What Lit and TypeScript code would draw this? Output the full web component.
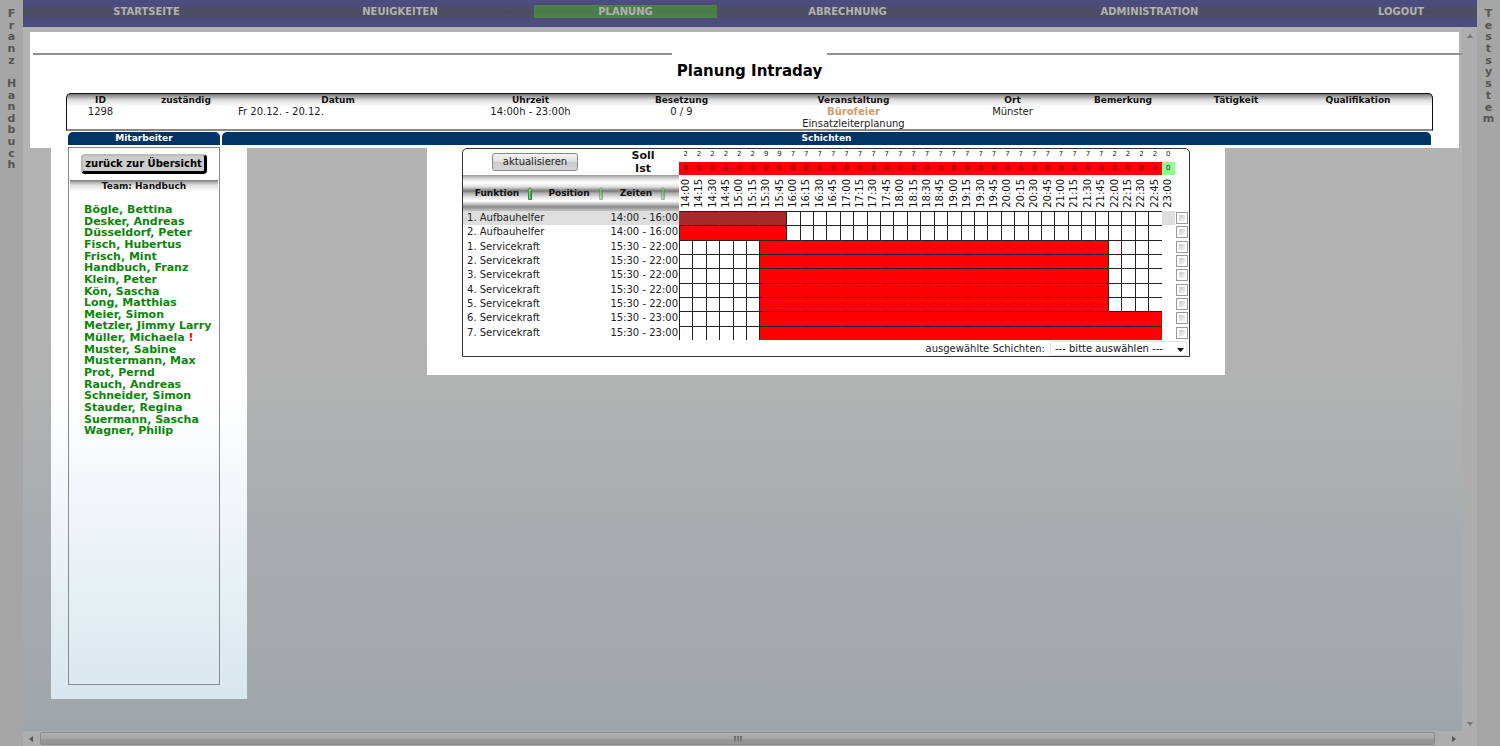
import { LitElement, html, css } from "lit";
import { customElement, state } from "lit/decorators.js";

interface Shift {
  nr: number;
  name: string;
  from: number;
  to: number;
}

const SLOTS = 37;
const START = 14 * 60;

const clock = (minutes: number) =>
  `${String(Math.floor(minutes / 60)).padStart(2, "0")}:${String(minutes % 60).padStart(2, "0")}`;

const SHIFTS: Shift[] = [
  { nr: 1, name: "Aufbauhelfer", from: 0, to: 8 },
  { nr: 2, name: "Aufbauhelfer", from: 0, to: 8 },
  { nr: 1, name: "Servicekraft", from: 6, to: 32 },
  { nr: 2, name: "Servicekraft", from: 6, to: 32 },
  { nr: 3, name: "Servicekraft", from: 6, to: 32 },
  { nr: 4, name: "Servicekraft", from: 6, to: 32 },
  { nr: 5, name: "Servicekraft", from: 6, to: 32 },
  { nr: 6, name: "Servicekraft", from: 6, to: 36 },
  { nr: 7, name: "Servicekraft", from: 6, to: 36 },
];

const STAFF = [
  "Bögle, Bettina", "Desker, Andreas", "Düsseldorf, Peter", "Fisch, Hubertus", "Frisch, Mint",
  "Handbuch, Franz", "Klein, Peter", "Kön, Sascha", "Long, Matthias", "Meier, Simon",
  "Metzler, Jimmy Larry", "Müller, Michaela", "Muster, Sabine", "Mustermann, Max", "Prot, Pernd",
  "Rauch, Andreas", "Schneider, Simon", "Stauder, Regina", "Suermann, Sascha", "Wagner, Philip",
];

const MENU = ["STARTSEITE", "NEUIGKEITEN", "PLANUNG", "ABRECHNUNG", "ADMINISTRATION", "LOGOUT"];

@customElement("side-label")
class SideLabel extends LitElement {
  static properties = { text: {} };
  declare text: string;

  static styles = css`
    :host {
      display: block;
      padding-top: 8px;
      background: #a6a6a6;
      color: #555;
      font-weight: bold;
      font-size: 11px;
    }
    .letters {
      display: grid;
      justify-items: center;
      grid-auto-rows: 1fr;
    }
    .letter {
      min-height: 0;
      height: 0;
      line-height: 12px;
    }
  `;

  render() {
    return html`<div class="letters" style="height: ${Math.round((this.text.length * 35) / 3)}px">
      ${[...this.text].map((c) => html`<span class="letter">${c === " " ? "\u00a0" : c}</span>`)}
    </div>`;
  }
}

@customElement("event-table")
class EventTable extends LitElement {
  static styles = css`
    :host { display: block; }
    .event {
      display: grid;
      grid-template-columns: 67fr 104fr 200fr 185fr 117fr 227fr 91fr 130fr 96fr 148fr;
      grid-template-rows: 12px 23px;
      border: 1px solid #111;
      border-bottom: 2px solid #888;
      border-radius: 5px 5px 0 0;
      background: linear-gradient(#777, #ddd 6px, #f7f7f7 11px, #fff 12px);
      font-size: 10px;
      line-height: 12px;
    }
    thead, tbody, tr { display: contents; }
    th, td { padding: 0; text-align: center; min-width: 0; white-space: nowrap; }
    th { font-size: 9px; color: #111; }
    td { color: #222; }
    .date { text-align: left; }
    .title { color: #d49a68; text-decoration: none; font-weight: bold; }
  `;

  render() {
    const heads = ["ID", "zuständig", "Datum", "Uhrzeit", "Besetzung", "Veranstaltung", "Ort", "Bemerkung", "Tätigkeit", "Qualifikation"];
    return html`<table class="event">
      <thead><tr>${heads.map((h) => html`<th scope="col">${h}</th>`)}</tr></thead>
      <tbody><tr>
        <td>1298</td><td></td><td class="date">Fr 20.12. - 20.12.</td><td>14:00h - 23:00h</td><td>0 / 9</td>
        <td><a class="title" href="#">Bürofeier</a><br>Einsatzleiterplanung</td>
        <td>Münster</td><td></td><td></td><td></td>
      </tr></tbody>
    </table>`;
  }
}

@customElement("staff-panel")
class StaffPanel extends LitElement {
  static styles = css`
    :host {
      display: block;
      box-sizing: border-box;
      border: 1px solid #8a8a8a;
      padding: 6px 1px 0;
    }
    .back {
      display: block;
      box-sizing: border-box;
      margin: 0 auto;
      padding: 0;
      width: 126px;
      height: 20px;
      border: 2px solid;
      border-color: #bbb #000 #000 #bbb;
      border-right-width: 3px;
      border-bottom-width: 3px;
      border-radius: 4px;
      background: #ccc;
      color: #000;
      font: bold 10px/15px "DejaVu Sans", Verdana, sans-serif;
      white-space: nowrap;
    }
    .team {
      margin: 6px 0 12px;
      background: linear-gradient(#888 1px, #aaa 2px, #ddd 5px, #f7f7f7 10px, #fff);
      color: #111;
      font-size: 9px;
      line-height: 12px;
      text-align: center;
    }
    .names {
      display: grid;
      grid-auto-rows: 1fr;
      height: 233px;
      margin: 0;
      padding: 0 0 0 14px;
      list-style: none;
      font-size: 11px;
      line-height: 12px;
      font-weight: bold;
    }
    .names li { min-height: 0; white-space: nowrap; }
    .names a { color: #0b860b; text-decoration: none; }
    .alert { color: #f00; }
  `;

  render() {
    return html`
      <button class="back">zurück zur Übersicht</button>
      <h2 class="team">Team: Handbuch</h2>
      <ul class="names">
        ${STAFF.map((n) => html`<li><a href="#">${n}</a>${n.startsWith("Müller") ? html` <span class="alert">!</span>` : ""}</li>`)}
      </ul>`;
  }
}

@customElement("shift-plan")
class ShiftPlan extends LitElement {
  @state() private selected = new Set<number>();

  static styles = css`
    :host {
      display: block;
      border: 1px solid #333;
      border-radius: 5px 5px 0 0;
      background: #fff;
      color: #222;
      font-size: 10px;
    }
    .plan {
      display: grid;
      grid-template-columns: 82px 62px 72px repeat(37, 1fr) 14px;
      grid-template-rows: 13px 13px 36px;
    }
    thead, tr { display: contents; }
    tbody {
      display: grid;
      grid-column: 1 / -1;
      grid-template-columns: subgrid;
      grid-template-rows: repeat(9, 1fr);
      height: 129px;
    }
    th, td { padding: 0; min-width: 0; white-space: nowrap; }
    .action { grid-column: 1 / 3; grid-row: 1 / 3; display: grid; place-items: center; }
    .refresh {
      box-sizing: border-box;
      width: 86px;
      height: 18px;
      padding: 0;
      border: 1px solid #888;
      border-radius: 3px;
      background: linear-gradient(#f4f4f4, #ddd 50%, #ccc 51%, #d6d6d6);
      color: #222;
      font: 10px/16px "DejaVu Sans", Verdana, sans-serif;
    }
    .label { color: #111; font-size: 11px; line-height: 14px; text-align: center; }
    .count { font-size: 7px; line-height: 11px; text-align: center; }
    .actual { line-height: 12px; color: #400; background: #f00; }
    .met { color: #222; background: #90ff90; }
    .sort {
      display: flex;
      align-items: center;
      justify-content: center;
      gap: 8px;
      color: #111;
      font-size: 9px;
      line-height: 12px;
    }
    .metal {
      background: linear-gradient(#999, #eee 5px, #fff 8px, #ddd 12px, #777 16px, #aaa 18px, #eee 23px, #fff 26px, #888 32px, #bbb 35px);
    }
    .arrow { width: 6px; height: 13px; }
    .time { display: grid; place-items: center; color: #111; font-weight: normal; }
    .turned { writing-mode: vertical-rl; rotate: 180deg; line-height: 12px; }
    .name { grid-column: 1 / 3; padding-left: 4px; line-height: 14px; }
    .span { text-align: right; padding-right: 1px; line-height: 14px; }
    .slot { border-left: 1px solid #222; border-top: 1px solid #222; }
    .busy { background: #f00; border-left-color: #f00; }
    .first { border-left-color: #222; }
    .marked .busy { background: #a52a2a; border-left-color: #a52a2a; }
    .marked .name, .marked .span, .marked .rest { background: #dedede; }
    .pick { display: grid; place-items: center; }
    .check {
      appearance: none;
      box-sizing: border-box;
      width: 12px;
      height: 12px;
      margin: 0;
      border: 1px solid #999;
      background: linear-gradient(135deg, #c4c8cc, #fafafa) content-box #eee;
      padding: 2px;
    }
    .check:checked { background: #456 content-box; }
    .footer {
      display: flex;
      justify-content: flex-end;
      align-items: center;
      gap: 5px;
      height: 16px;
      padding-right: 2px;
    }
    .choice { position: relative; display: flex; }
    .select {
      appearance: none;
      box-sizing: border-box;
      width: 137px;
      height: 15px;
      padding: 0 4px;
      border: 1px solid #e2e2e6;
      border-radius: 2px;
      background: #fff;
      color: #111;
      font: 10px/13px "DejaVu Sans", Verdana, sans-serif;
    }
    .caret { position: absolute; right: 3px; top: 7px; width: 7px; height: 4px; pointer-events: none; }
  `;

  private toggle(i: number) {
    const next = new Set(this.selected);
    next.has(i) ? next.delete(i) : next.add(i);
    this.selected = next;
  }

  private arrow(active: boolean) {
    return html`<svg class="arrow" viewBox="0 0 6 13" opacity=${active ? 1 : 0.5}>
      <path d="M3 .5 5.5 3.5 4.5 3.5V12.5H1.5V3.5H.5Z" fill="#7ed07e" stroke="#3a8f3a"/>
      <path d="M4 4V12" stroke="#2f7d2f"/>
    </svg>`;
  }

  render() {
    const slots = Array.from({ length: SLOTS }, (_, i) => i);
    const need = slots.map((i) => SHIFTS.filter((s) => i >= s.from && i < s.to).length);
    return html`
      <table class="plan">
        <thead>
          <tr>
            <td class="action"><button class="refresh">aktualisieren</button></td>
            <th class="label" scope="row">Soll</th>
            ${need.map((n) => html`<td class="count">${n}</td>`)}
            <td></td>
          </tr>
          <tr>
            <th class="label" scope="row">Ist</th>
            ${need.map((n) => html`<td class="count actual ${n ? "" : "met"}">0</td>`)}
            <td></td>
          </tr>
          <tr>
            <th class="sort metal" scope="col">Funktion ${this.arrow(true)}</th>
            <th class="sort metal" scope="col">Position ${this.arrow(false)}</th>
            <th class="sort metal" scope="col">Zeiten ${this.arrow(false)}</th>
            ${slots.map((i) => html`<th class="time" scope="col"><span class="turned">${clock(START + i * 15)}</span></th>`)}
            <td></td>
          </tr>
        </thead>
        <tbody>
          ${SHIFTS.map((s, row) => html`<tr class=${row === 0 ? "marked" : ""}>
            <td class="name">${s.nr}. ${s.name}</td>
            <td class="span">${clock(START + s.from * 15)} - ${clock(START + s.to * 15)}</td>
            ${slots.map((i) => i === SLOTS - 1
              ? html`<td class="rest"></td>`
              : html`<td class="slot ${i >= s.from && i < s.to ? "busy" : ""} ${i === s.from ? "first" : ""}"></td>`)}
            <td class="pick"><input class="check" type="checkbox" aria-label="${s.nr}. ${s.name}"
              .checked=${this.selected.has(row)} @change=${() => this.toggle(row)}></td>
          </tr>`)}
        </tbody>
      </table>
      <div class="footer">
        <label for="bulk">ausgewählte Schichten:</label>
        <span class="choice">
          <select class="select" id="bulk"><option>--- bitte auswählen ---</option></select>
          <svg class="caret" viewBox="0 0 7 4"><path d="M0 0H7L3.5 4Z"/></svg>
        </span>
      </div>`;
  }
}

@customElement("app-root")
class AppRoot extends LitElement {
  static styles = css`
    :host {
      display: grid;
      grid-template-columns: 23px 1fr 23px;
      height: 100vh;
      overflow: hidden;
      font-family: "DejaVu Sans", Verdana, sans-serif;
    }
    .frame {
      display: grid;
      grid-template-columns: 1fr 15px;
      grid-template-rows: 27px 1fr 15px;
      min-width: 0;
      background: #adadad;
    }
    .menu {
      grid-column: 1 / -1;
      display: grid;
      grid-template-columns: 247fr 260fr 191fr 253fr 351fr 152fr;
      align-items: start;
      padding-top: 5px;
      background: linear-gradient(#4c4c80, #4c4c7c 4px, #4d4d62 11px, #4d4d62 14px, #4c4c7c 20px, #4c4c80);
      font-size: 10px;
      line-height: 13px;
      font-weight: bold;
      text-align: center;
    }
    .menu a { color: #b2b2b2; text-decoration: none; }
    .menu .active { margin: 0 4px; background: linear-gradient(#4c804c, #4c7a4c 50%, #4c844c); }
    .page {
      min-width: 0;
      padding: 5px 0 0 7px;
      background: linear-gradient(#b3b3b3 45%, #9fa6aa);
    }
    .sheet { margin-right: 3px; height: 116px; background: #fff; }
    .rules {
      display: flex;
      justify-content: space-between;
      gap: 155px;
      padding-top: 21px;
      margin: 0 -3px 0 3px;
    }
    .rule { height: 2px; background: #909090; }
    .rule:first-child { flex: 639; }
    .rule:last-child { flex: 635; }
    .title {
      margin: 7px 0 13px;
      padding-left: 10px;
      color: #000;
      font-size: 15px;
      line-height: 18px;
      text-align: center;
    }
    .event { margin: 0 26px 0 36px; }
    .tabs {
      display: grid;
      grid-template-columns: 152px 1fr;
      gap: 2px;
      margin: 1px 28px 0 38px;
    }
    .tab {
      margin: 0;
      border-radius: 5px 5px 0 0;
      background: #036;
      color: #fff;
      font-size: 9px;
      line-height: 13px;
      text-align: center;
    }
    .columns {
      display: grid;
      grid-template-columns: 196px minmax(0, 1fr);
      align-items: start;
      margin: 0 3px 0 21px;
    }
    .left {
      display: flex;
      height: 551px;
      background: linear-gradient(#fff 45%, #d9e7ee);
    }
    .staff { flex: 1; margin: -1px 27px 14px 17px; }
    .right {
      width: 66%;
      max-width: 798px;
      min-width: 700px;
      box-sizing: border-box;
      justify-self: center;
      margin-right: 54px;
      padding: 0 35px 18px;
      background: #fff;
    }
    .vscroll {
      display: flex;
      flex-direction: column;
      justify-content: space-between;
      align-items: center;
      padding: 6px 0 4px;
    }
    .hscroll {
      grid-column: 1 / -1;
      display: flex;
      align-items: center;
      gap: 6px;
      padding: 0 20px 0 5px;
    }
    .mark { width: 6px; height: 6px; flex: none; }
    .thumb {
      flex: 1;
      display: flex;
      align-items: center;
      justify-content: center;
      gap: 1px;
      box-sizing: border-box;
      height: 13px;
      border: 1px solid #8a8a8a;
      border-radius: 2px;
      background: linear-gradient(#b0b0b0, #a4a4a4 50%, #979797 51%, #949494);
    }
    .grip { width: 2px; height: 6px; background: linear-gradient(#666, #888); }
    .gap { margin-left: 10px; }
  `;

  render() {
    return html`
      <side-label text="Franz Handbuch"></side-label>
      <div class="frame">
        <nav class="menu">
          ${MENU.map((m) => html`<a href="#" class=${m === "PLANUNG" ? "active" : ""}>${m}</a>`)}
        </nav>
        <main class="page">
          <section class="sheet">
            <div class="rules"><div class="rule"></div><div class="rule"></div></div>
            <h1 class="title">Planung Intraday</h1>
            <event-table class="event"></event-table>
            <div class="tabs"><h2 class="tab">Mitarbeiter</h2><h2 class="tab">Schichten</h2></div>
          </section>
          <div class="columns">
            <section class="left"><staff-panel class="staff"></staff-panel></section>
            <section class="right"><shift-plan></shift-plan></section>
          </div>
        </main>
        <div class="vscroll">
          <svg class="mark" viewBox="0 0 6 6"><path d="M0 5 3 1 6 5Z" fill="#777"/></svg>
          <svg class="mark" viewBox="0 0 6 6"><path d="M0 1 3 5 6 1Z" fill="#777"/></svg>
        </div>
        <div class="hscroll">
          <svg class="mark" viewBox="0 0 6 6"><path d="M5 0 1 3 5 6Z" fill="#555"/></svg>
          <div class="thumb"><i class="grip"></i><i class="grip"></i><i class="grip"></i></div>
          <svg class="mark gap" viewBox="0 0 6 6"><path d="M1 0 5 3 1 6Z" fill="#555"/></svg>
        </div>
      </div>
      <side-label text="Testsystem"></side-label>`;
  }
}
